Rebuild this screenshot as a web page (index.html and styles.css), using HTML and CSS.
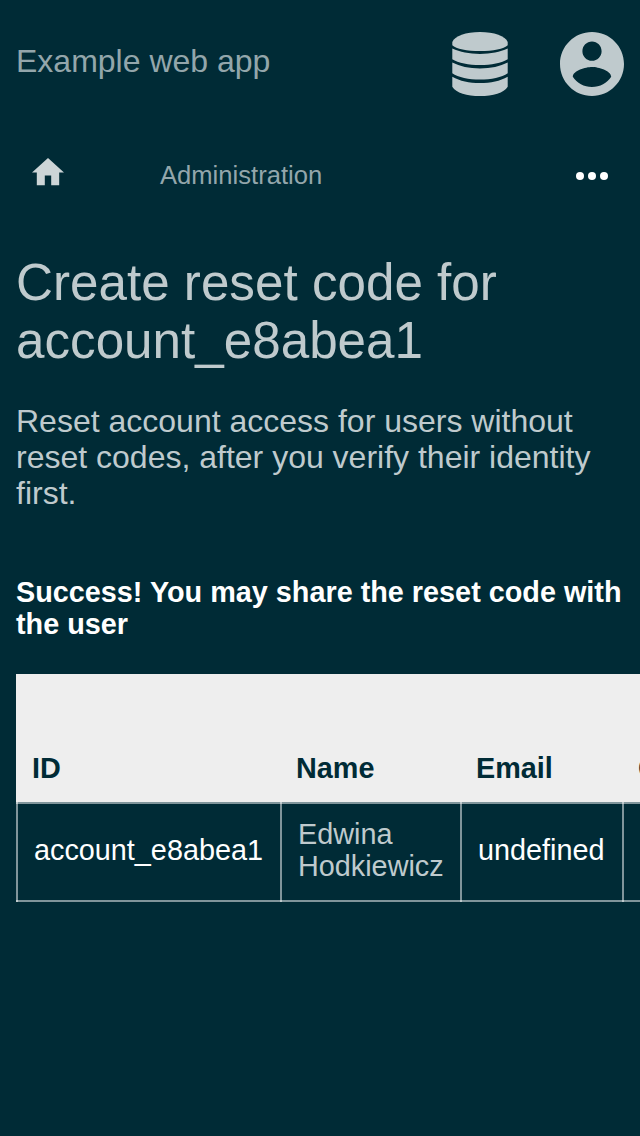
FILE: index.html
```html
<!DOCTYPE html>
<html lang="en">
<head>
<meta charset="utf-8">
<title>Example web app</title>
<link rel="stylesheet" href="styles.css">
</head>
<body>
<header class="topbar">
  <div class="brand">Example web app</div>
  <div class="actions">
    <svg class="icon-database" viewBox="0 0 56 64" aria-hidden="true">
      <path d="M0.3 10C2.5 4 14 0 28 0s25.500 4 27.700 10v3.200C52 17 41 19 28 19S4 17 .3 13.200z"/>
      <path d="M.3 16.600C8 20 17 21.900 28 21.900s20-1.900 27.700-5.300v10.600C50 31 39 33 28 33S6 31 .3 27.200z"/>
      <path d="M.3 30.600C8 34.500 17 36.500 28 36.500s20-2 27.700-5.900v10.700C50 45.500 39 47.600 28 47.600S6 45.500.3 41.300z"/>
      <path d="M.3 44.700C8 49 17 51 28 51s20-2 27.700-6.300v10C52 61 41 64 28 64S4 61 .3 54.700z"/>
    </svg>
    <svg class="icon-account" viewBox="2 2 20 20" aria-hidden="true">
      <path d="M12 2C6.480 2 2 6.480 2 12s4.480 10 10 10 10-4.480 10-10S17.520 2 12 2zm0 3c1.660 0 3 1.340 3 3s-1.340 3-3 3-3-1.340-3-3 1.340-3 3-3zm0 14.200c-2.500 0-4.710-1.280-6-3.220.03-1.990 4-3.080 6-3.080 1.990 0 5.970 1.090 6 3.080-1.290 1.940-3.500 3.220-6 3.220z"/>
    </svg>
  </div>
</header>
<nav class="crumbs">
  <svg class="icon-home" viewBox="2 3 20 17" aria-hidden="true"><path d="M10 20v-6h4v6h5v-8h3L12 3 2 12h3v8z"/></svg>
  <span class="crumb">Administration</span>
  <svg class="icon-more" viewBox="0 0 32 8" aria-hidden="true"><circle cx="4" cy="4" r="4"/><circle cx="16" cy="4" r="4"/><circle cx="28" cy="4" r="4"/></svg>
</nav>
<main class="content">
  <h1 class="title">Create reset code for account_e8abea1</h1>
  <p class="lead">Reset account access for users without reset codes, after you verify their identity first.</p>
  <p class="status">Success! You may share the reset code with the user</p>
  <div class="table-scroll">
    <table class="accounts">
      <colgroup><col class="col-id"><col class="col-name"><col class="col-email"><col class="col-code"></colgroup>
      <thead><tr><th>ID</th><th>Name</th><th>Email</th><th>Code</th></tr></thead>
      <tbody><tr><td>account_e8abea1</td><td class="muted">Edwina Hodkiewicz</td><td>undefined</td><td></td></tr></tbody>
    </table>
  </div>
</main>
</body>
</html>
```
FILE: styles.css
```css
* { box-sizing: border-box; }
html { overflow: hidden; background: #002b36; }
body {
  margin: 0;
  width: 640px;
  height: 1136px;
  overflow: hidden;
  background: #002b36;
  color: #fff;
  font-family: "Liberation Sans", Arial, sans-serif;
  font-size: 28.8px;
  line-height: 32px;
}
svg { display: block; fill: currentColor; }
.topbar {
  display: flex;
  justify-content: space-between;
  padding: 32px 16px;
  height: 128px;
}
.brand { font-size: 32px; line-height: 36px; padding-top: 11px; color: #93a6ab; }
.actions { display: flex; gap: 52px; color: #bfcacd; }
.icon-database { width: 56px; height: 64px; }
.icon-account { width: 64px; height: 64px; }
.crumbs {
  display: flex;
  align-items: center;
  height: 96px;
  padding: 0 32px;
}
.icon-home { width: 32px; height: 27.2px; margin-bottom: 8px; color: #ccd5d7; }
.crumb { margin: 0 0 2px 96px; font-size: 25.6px; line-height: 30px; color: #93a6ab; }
.icon-more { width: 32px; height: 8px; margin-left: auto; }
.content { padding: 30px 16px 0; }
.title { margin: 0; font-size: 51.2px; line-height: 58px; font-weight: 400; color: #bfcacd; }
.lead { margin: 33px 0 0; font-size: 32px; line-height: 36px; color: #bfcacd; }
.status { margin: 65px 0 0; font-weight: 700; }
.table-scroll { margin: 34px -16px 0 0; overflow: hidden; }
.accounts { width: 786px; table-layout: fixed; border-spacing: 0; }
.col-id { width: 264px; }
.col-name { width: 180px; }
.col-email { width: 162px; }
.col-code { width: 180px; }
th {
  height: 128px;
  padding: 0 16px 18px;
  background: #eee;
  color: #002b36;
  text-align: left;
  vertical-align: bottom;
}
td {
  height: 100px;
  padding: 16px 16px 20px 18px;
  vertical-align: middle;
  background:
    linear-gradient(#ffffff80, #ffffff80) left / 2px 100% no-repeat,
    linear-gradient(#ffffff80, #ffffff80) top / 100% 2px no-repeat,
    linear-gradient(#ffffff80, #ffffff80) bottom / 100% 2px no-repeat;
}
.muted { color: #bfcacd; }
```
